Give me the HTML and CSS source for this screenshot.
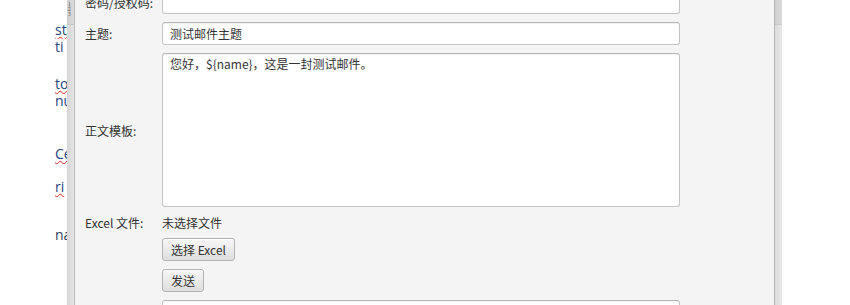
FILE: index.html
```html
<!DOCTYPE html>
<html lang="zh-CN">
<head>
    <meta charset="UTF-8">
    <meta name="viewport" content="width=device-width, initial-scale=1.0">
    <title>邮件发送</title>
    <link rel="stylesheet" href="styles.css">
</head>
<body>
<div class="screen">
    <div class="editor">
        <div class="ed-line l1"><span class="typo">st</span></div>
        <div class="ed-line l2">ti</div>
        <div class="ed-line l3"><span class="typo">to</span></div>
        <div class="ed-line l4">nu</div>
        <div class="ed-line l5"><span class="typo">Ce</span></div>
        <div class="ed-line l6"><span class="typo">ri</span></div>
        <div class="ed-line l7">na</div>
    </div>

    <div class="side-bar left-bar">
        <div class="bar-top"><span class="nums">1 2 3</span></div>
    </div>

    <div class="dialog">
        <div class="form">
            <label class="lbl">密码/授权码:</label>
            <input type="password" class="field">

            <label class="lbl">主题:</label>
            <input type="text" class="field" value="测试邮件主题">

            <label class="lbl">正文模板:</label>
            <textarea class="field area">您好，${name}，这是一封测试邮件。</textarea>

            <label class="lbl">Excel 文件:</label>
            <span class="file-name">未选择文件</span>

            <span></span>
            <div><button class="btn">选择 Excel</button></div>

            <span></span>
            <div><button class="btn">发送</button></div>

            <span></span>
            <input type="text" class="field">
        </div>
    </div>

    <div class="side-bar right-bar">
        <div class="bar-top"></div>
    </div>

    <div class="rest"></div>
</div>
</body>
</html>
```

FILE: styles.css
```css
body {
    margin: 0;
    background: #ffffff;
    font-family: "Noto Sans CJK SC", "Noto Sans", sans-serif;
    font-size: 12px;
    color: #333333;
}
.screen {
    display: flex;
    width: 850px;
    height: 305px;
    overflow: hidden;
}

/* окно редактора за диалогом */
.editor {
    width: 67px;
    flex-shrink: 0;
    box-sizing: border-box;
    display: flex;
    flex-direction: column;
    padding: 22px 0 0 55px;
    overflow: hidden;
}
.ed-line {
    width: 12px;
    height: 16px;
    line-height: 16px;
    overflow: hidden;
    font-family: "Open Sans", sans-serif;
    font-size: 14px;
    color: #24457e;
    white-space: nowrap;
}
.typo {
    text-decoration: underline wavy #e02020;
    text-decoration-thickness: 1px;
    text-underline-offset: 1px;
}
.l1 { height: 17px; line-height: 15px; }
.l3 { height: 18px; margin-top: 21px; }
.l4 { margin-top: -1px; }
.l5 { height: 18px; margin-top: 37px; }
.l6 { height: 18px; margin-top: 15px; }
.l7 { margin-top: 30px; color: #33415e; }

.side-bar {
    width: 7px;
    flex-shrink: 0;
    display: flex;
    flex-direction: column;
    background: linear-gradient(to right, #d6d6d6, #e4e4e4);
}
.left-bar {
    border-right: 1px solid #bdbdbd;
}
.right-bar {
    border-left: 1px solid #b4b4b4;
    background: linear-gradient(to right, #dcdcdc, #e8e8e8);
}
.bar-top {
    height: 24px;
    border-bottom: 1px solid #c8c8c8;
    background: linear-gradient(to right, #cfcfcf, #dadada);
    overflow: hidden;
}
.nums {
    display: block;
    width: 4px;
    font-size: 5px;
    line-height: 5px;
    color: #555;
    padding: 1px 0 0 1px;
    word-break: break-all;
}
.rest {
    flex: 1;
    background: #ffffff;
}

/* диалог */
.dialog {
    width: 699px;
    flex-shrink: 0;
    background: #f4f4f4;
}
.form {
    display: grid;
    grid-template-columns: 77px 518px;
    grid-template-rows: 23px 23px 154px 15px 23px 23px 23px;
    row-gap: 8px;
    margin-top: -9px;
    margin-left: 10px;
}
.lbl {
    display: flex;
    align-items: center;
    white-space: nowrap;
    line-height: 15px;
}
.file-name {
    line-height: 15px;
}
.field {
    box-sizing: border-box;
    width: 518px;
    height: 100%;
    margin: 0;
    padding: 0 7px;
    border: 1px solid #c4c4c4;
    border-top-color: #b6b6b6;
    border-radius: 3px;
    background: #ffffff;
    box-shadow: inset 0 1px 1px rgba(0, 0, 0, 0.06);
    font-family: inherit;
    font-size: 12px;
    color: #333333;
    outline: none;
}
.area {
    resize: none;
    padding: 2px 7px;
    line-height: 15px;
    overflow: hidden;
}
.btn {
    box-sizing: border-box;
    height: 23px;
    padding: 0 8px;
    margin: 0;
    border: 1px solid #b3b3b3;
    border-radius: 3px;
    background: linear-gradient(to bottom, #f7f7f7, #dedede);
    box-shadow: inset 0 1px 0 rgba(255, 255, 255, 0.8);
    font-family: inherit;
    font-size: 12px;
    line-height: 21px;
    color: #333333;
}
```
